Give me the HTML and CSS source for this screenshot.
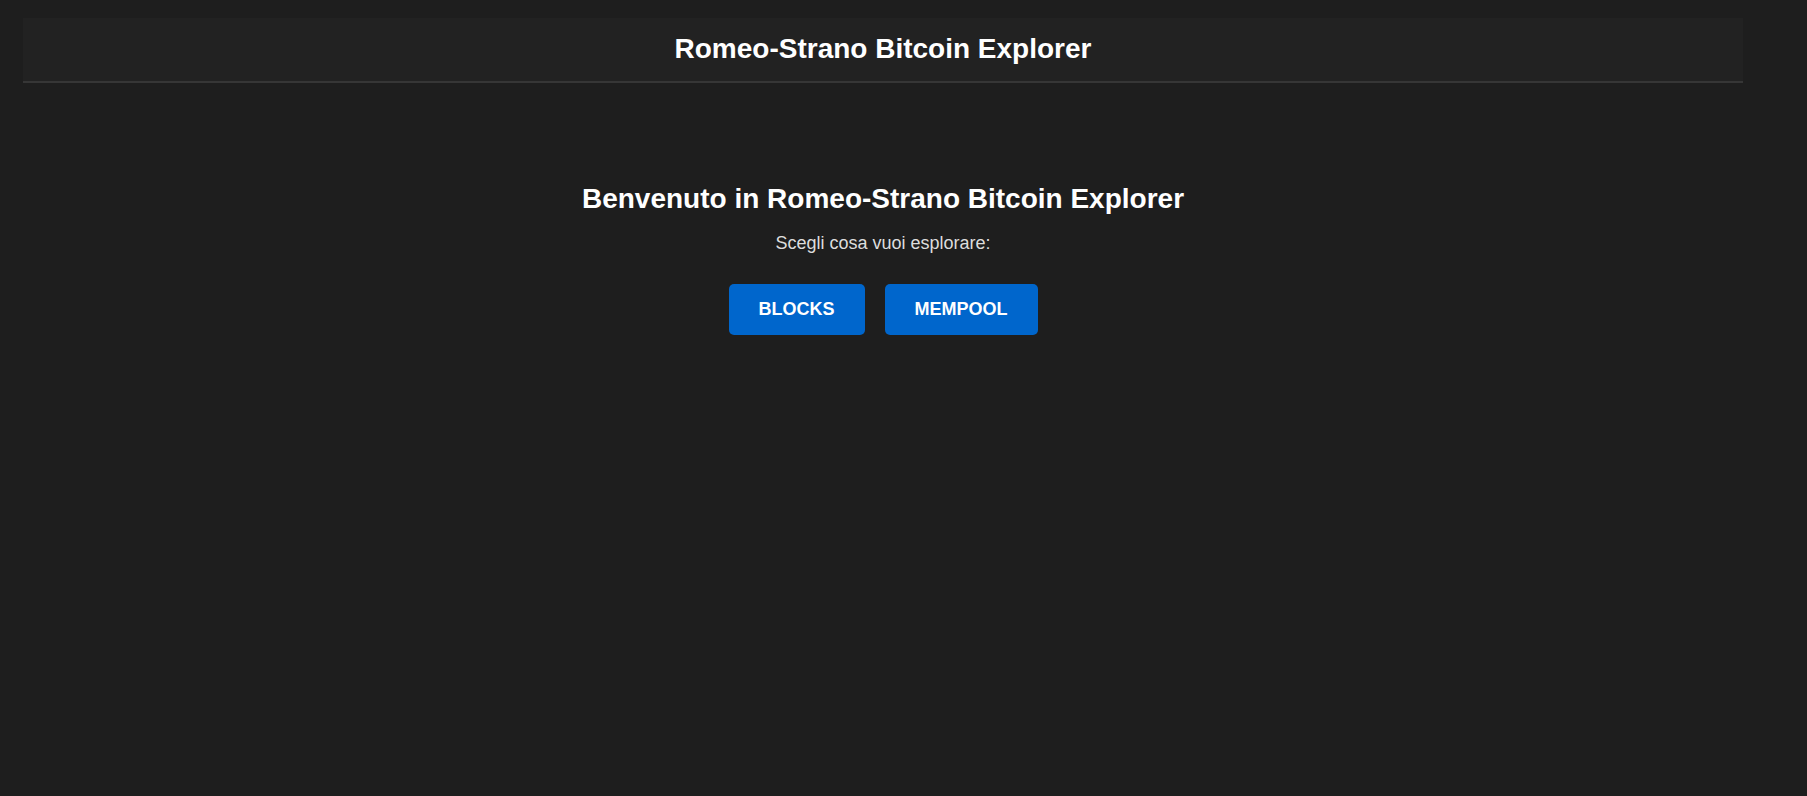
FILE: index.html
```html
<!DOCTYPE html>
<html lang="it">
<head>
<meta charset="utf-8">
<title>Romeo-Strano Bitcoin Explorer</title>
<link rel="stylesheet" href="styles.css">
</head>
<body>
<div class="page">
  <header class="site-header">
    <h1 class="site-title">Romeo-Strano Bitcoin Explorer</h1>
  </header>
  <main class="welcome">
    <h2 class="welcome-title">Benvenuto in Romeo-Strano Bitcoin Explorer</h2>
    <p class="welcome-sub">Scegli cosa vuoi esplorare:</p>
    <div class="actions">
      <button class="btn">BLOCKS</button>
      <button class="btn">MEMPOOL</button>
    </div>
  </main>
</div>
</body>
</html>
```
FILE: styles.css
```css
html, body {
  margin: 0;
  padding: 0;
  background: #1e1e1e;
}
body {
  font-family: "Liberation Sans", Arial, sans-serif;
  color: #ffffff;
}
.page {
  width: 1720px;
  padding: 18px 0 0 23px;
}
.site-header {
  background: #222222;
  border-bottom: 2px solid #363636;
  padding: 15px 0 16px;
  text-align: center;
}
.site-title {
  margin: 0;
  font-size: 28px;
  font-weight: bold;
  line-height: 32px;
  color: #ffffff;
}
.welcome {
  text-align: center;
  padding-top: 100px;
}
.welcome-title {
  margin: 0;
  font-size: 28px;
  font-weight: bold;
  line-height: 32px;
  color: #ffffff;
}
.welcome-sub {
  margin: 18px 0 0;
  font-size: 18px;
  line-height: 21px;
  color: #dddddd;
}
.actions {
  display: flex;
  justify-content: center;
  gap: 20px;
  margin-top: 30px;
}
.btn {
  font-family: "Liberation Sans", Arial, sans-serif;
  font-size: 18px;
  font-weight: bold;
  line-height: 21px;
  color: #ffffff;
  background: #0066cc;
  border: none;
  border-radius: 5px;
  padding: 15px 30px;
  cursor: pointer;
}
```
